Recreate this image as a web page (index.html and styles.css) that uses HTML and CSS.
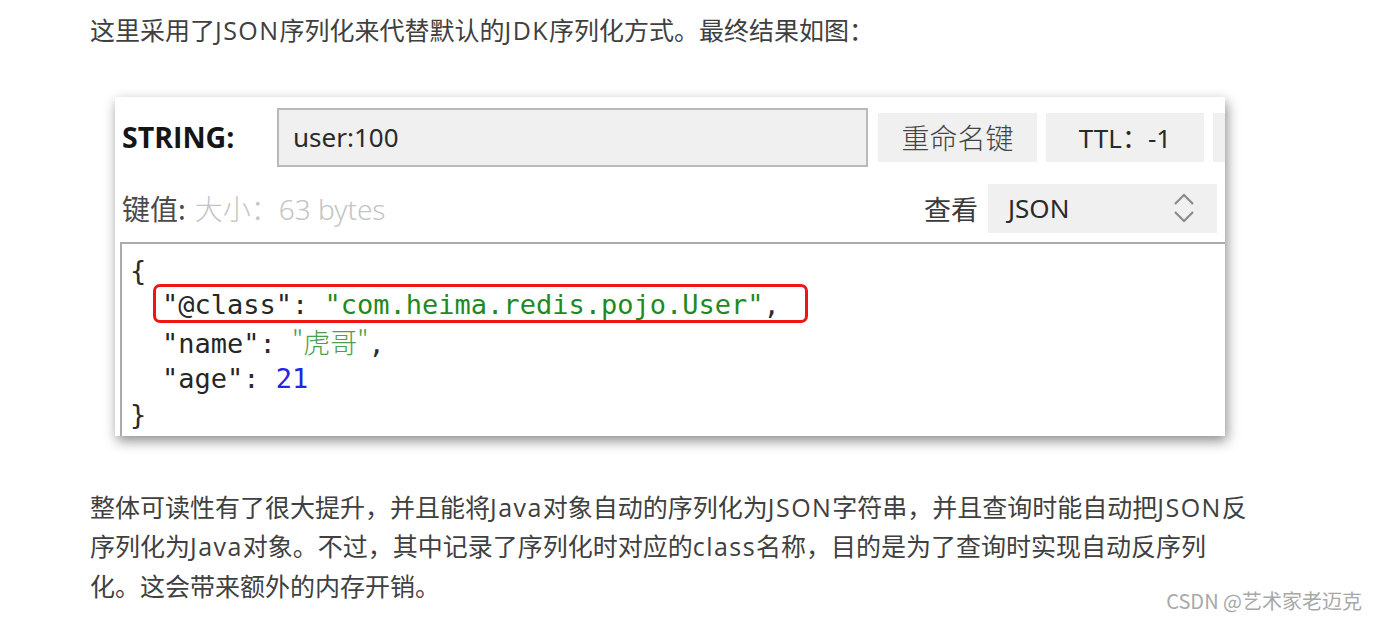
FILE: index.html
```html
<!DOCTYPE html>
<html lang="zh-CN">
<head>
<meta charset="utf-8">
<title>JSON序列化</title>
<link rel="stylesheet" href="styles.css">
</head>
<body>
<main class="article">
  <p class="para first">这里采用了<span class="en">JSON</span>序列化来代替默认的<span class="en">JDK</span>序列化方式。最终结果如图：</p>
  <figure class="shot">
    <div class="win">
      <div class="row1">
        <span class="type">STRING:</span>
        <div class="keyinput">user:100</div>
        <button class="btn rename">重命名键</button>
        <button class="btn ttl">TTL：-1</button>
        <button class="btn cut"></button>
      </div>
      <div class="row2">
        <span class="lbl">键值:</span>
        <span class="size">大小：63 bytes</span>
        <span class="spacer"></span>
        <span class="view">查看</span>
        <div class="select">
          <span class="sel-text">JSON</span>
          <svg class="chev" width="22" height="34" viewBox="0 0 22 34" aria-hidden="true">
            <path d="M2 13 L11 4 L20 13" fill="none" stroke="#8a8a8a" stroke-width="2.2"/>
            <path d="M2 21 L11 30 L20 21" fill="none" stroke="#8a8a8a" stroke-width="2.2"/>
          </svg>
        </div>
      </div>
      <div class="editor">
        <div class="ln">{</div>
        <div class="ln ind l2"><span class="hl"><span class="k">"@class"</span>: <span class="s">"com.heima.redis.pojo.User"</span>,</span></div>
        <div class="ln ind"><span class="k">"name"</span>: <span class="s cjk">"虎哥"</span>,</div>
        <div class="ln ind"><span class="k">"age"</span>: <span class="n">21</span></div>
        <div class="ln">}</div>
      </div>
    </div>
  </figure>
  <p class="para">整体可读性有了很大提升，并且能将<span class="en">Java</span>对象自动的序列化为<span class="en">JSON</span>字符串，并且查询时能自动把<span class="en">JSON</span>反序列化为<span class="en">Java</span>对象。不过，其中记录了序列化时对应的<span class="en">class</span>名称，目的是为了查询时实现自动反序列化。这会带来额外的内存开销。</p>
</main>
<div class="watermark">CSDN @艺术家老迈克</div>
</body>
</html>
```
FILE: styles.css
```css
html, body {
  margin: 0;
  padding: 0;
  background: #ffffff;
}
body {
  position: relative;
  width: 1378px;
  height: 620px;
  overflow: hidden;
  font-family: "Noto Sans CJK SC", "Noto Sans", sans-serif;
}
.article {
  width: 1166px;
  margin-left: 90px;
  padding-top: 11px;
}
.para {
  margin: 0;
  font-family: "Open Sans", "Noto Sans CJK SC", sans-serif;
  font-size: 25px;
  line-height: 39.5px;
  color: #404040;
}
.en {
  letter-spacing: 1.45px;
}
.shot {
  margin: 46px 0 52px 25px;
}
.win {
  width: 1110px;
  height: 339px;
  background: #ffffff;
  box-shadow: 2px 5px 12px rgba(0, 0, 0, 0.45);
  overflow: hidden;
}
.row1 {
  display: flex;
  align-items: center;
  height: 59px;
  padding: 11px 0 0 7px;
}
.type {
  flex-shrink: 0;
  width: 155px;
  font-family: "Open Sans", "Noto Sans", sans-serif;
  font-weight: 700;
  font-size: 28.5px;
  color: #151515;
}
.keyinput {
  flex-shrink: 0;
  box-sizing: border-box;
  width: 591px;
  height: 59px;
  display: flex;
  align-items: center;
  padding-left: 14px;
  background: #f0f0f0;
  border: 2px solid #b9b9b9;
  font-family: "Noto Sans", sans-serif;
  font-size: 26px;
  color: #2a2a2a;
}
.btn {
  flex-shrink: 0;
  height: 49px;
  border: none;
  background: #f0f0f0;
  padding: 0;
  color: #444;
  font-family: "Noto Sans CJK SC", "Noto Sans", sans-serif;
  font-size: 28px;
  font-weight: 300;
}
.rename {
  width: 159px;
  margin-left: 10px;
}
.ttl {
  width: 158px;
  margin-left: 9px;
  font-family: "Noto Sans", sans-serif;
  font-weight: 400;
  font-size: 26px;
  color: #2a2a2a;
}
.cut {
  width: 100px;
  margin-left: 9px;
}
.row2 {
  display: flex;
  align-items: center;
  height: 49px;
  margin-top: 17px;
  padding: 0 8px 0 7px;
}
.lbl {
  font-size: 28px;
  font-weight: 400;
  color: #4a4a4a;
}
.size {
  margin-left: 9px;
  font-family: "Noto Sans", "Noto Sans CJK SC", sans-serif;
  font-size: 28px;
  font-weight: 300;
  color: #c4c4c4;
}
.spacer {
  flex: 1;
}
.view {
  font-size: 27px;
  font-weight: 400;
  color: #3a3a3a;
}
.select {
  box-sizing: border-box;
  width: 229px;
  height: 49px;
  margin-left: 10px;
  display: flex;
  align-items: center;
  justify-content: space-between;
  padding: 0 22px 0 20px;
  background: #f0f0f0;
}
.sel-text {
  font-family: "Noto Sans", sans-serif;
  font-size: 26px;
  color: #2a2a2a;
}
.chev {
  display: block;
}
.editor {
  margin: 9px 0 0 5px;
  height: 200px;
  border-top: 2px solid #ababab;
  border-left: 2px solid #ababab;
  padding: 9px 0 0 8px;
  font-family: "DejaVu Sans Mono", "Liberation Mono", monospace;
  font-size: 27px;
  line-height: 36.5px;
  color: #2b2b2b;
}
.ln {
  height: 36.5px;
  white-space: pre;
}
.l2 {
  height: 35px;
  line-height: 32px;
}
.ind {
  padding-left: 32px;
}
.hl {
  position: relative;
  display: inline-block;
}
.hl::after {
  content: "";
  position: absolute;
  left: -9px;
  right: -28px;
  top: -5px;
  bottom: -2px;
  border: 3px solid #f01515;
  border-radius: 7px;
}
.k {
  color: #262626;
}
.s {
  color: #1f8a22;
}
.cjk {
  font-family: "Noto Sans CJK SC", sans-serif;
  font-weight: 300;
  color: #4aa04a;
}
.n {
  color: #2424e6;
}
.watermark {
  position: absolute;
  right: 16px;
  top: 587px;
  font-size: 20px;
  line-height: 28px;
  color: #a8a8a8;
  font-family: "Noto Sans CJK SC", "Noto Sans", sans-serif;
}
```
